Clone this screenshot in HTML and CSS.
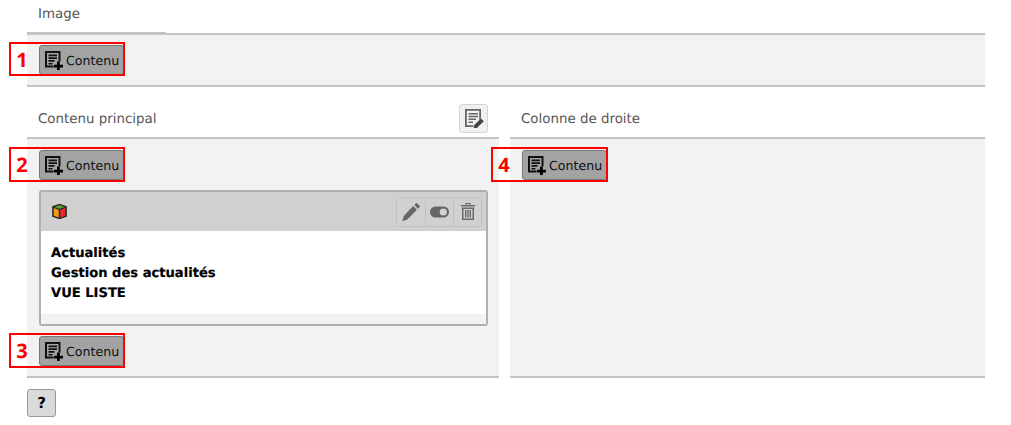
FILE: index.html
```html
<!DOCTYPE html>
<html lang="fr">
<head>
<meta charset="utf-8">
<title>Page</title>
<link rel="stylesheet" href="styles.css">
</head>
<body>
<svg class="defs" width="0" height="0" aria-hidden="true">
  <symbol id="doc-plus" viewBox="0 0 20 20">
    <path d="M1 1h15.500v10.500h-2V3H3v12.500h6.500v2H1z" fill="#111"/>
    <path d="M4.500 4.500h8.500v1.700H4.500zM4.500 7.300h8.500v1.700H4.500zM4.500 10.100h6v1.700h-6zM4.500 12.900h4v1.700h-4z" fill="#111"/>
    <path d="M13 11.500h2.800v3.200H19v2.800h-3.200V20.500H13v-3H10v-2.800h3z" fill="#000"/>
  </symbol>
</svg>
<main class="page">
  <section class="zone">
    <header class="zone-head zone-head-image"><span class="zone-title">Image</span></header>
    <div class="zone-body zone-body-image">
      <div class="callout callout-1"><span class="callout-num">1</span></div>
      <button class="add"><svg class="add-icon"><use href="#doc-plus"/></svg>Contenu</button>
    </div>
  </section>
  <div class="columns">
    <section class="zone column-left">
      <header class="zone-head">
        <span class="zone-title">Contenu principal</span>
        <button class="edit-btn" aria-label="Modifier">
          <svg viewBox="0 0 20 20" width="20" height="20">
            <path d="M1 1h16v9.500l-1.800 1.800V2.800H2.800v14.400h6.700L9 19H1z" fill="#666"/>
            <path d="M4.500 5h9.500v1.500H4.500zM4.500 7.800h9.500v1.500H4.500zM4.500 10.600h7.500v1.500H4.500zM4.500 13.400h4.500v1.500H4.500z" fill="#666"/>
            <path d="M17 10.500l2.800 2.800-6.800 6.700-3.500.500.700-3.400z" fill="#444"/>
          </svg>
        </button>
      </header>
      <div class="zone-body">
        <div class="callout callout-2"><span class="callout-num">2</span></div>
        <button class="add"><svg class="add-icon"><use href="#doc-plus"/></svg>Contenu</button>
        <article class="card">
          <div class="card-head">
            <svg class="cube" viewBox="0 0 18 18" width="17" height="17">
              <path d="M9 .8l7.800 2.700v11L9 17.300l-7.800-2.800v-11z" fill="#2b2b2b"/>
              <path d="M9 2.300l5.300 1.900L9 6.100 3.700 4.200z" fill="#5fa82b"/>
              <path d="M2.900 5.400l5.300 2v8L2.900 13.500z" fill="#f59a14"/>
              <path d="M15.100 5.400l-5.300 2v8l5.300-1.900z" fill="#e8262c"/>
            </svg>
            <div class="tools">
              <button class="tool" aria-label="Modifier">
                <svg viewBox="0 0 20 20" width="20" height="20"><path d="M15.500.8l3.700 3.700-2.200 2.200-3.700-3.700zM12.200 4.100l3.700 3.700-9.600 9.600-5 1.800 1.500-5.200z" fill="#666"/></svg>
              </button>
              <button class="tool" aria-label="Masquer">
                <svg viewBox="0 0 19 12" width="19" height="12"><rect y="0.500" width="19" height="11" rx="5.500" fill="#666"/><circle cx="13.300" cy="6" r="3.600" fill="#d2d2d2"/></svg>
              </button>
              <button class="tool" aria-label="Supprimer">
                <svg viewBox="0 0 14 17" width="14" height="17"><path d="M4.500 0h5v2H14v1.500H0V2h4.500zM5.700 1v1h2.600V1zM1 4.500h12V17H1zM2.500 6v9.500h9V6zM4 7h1.400v7.500H4zM6.300 7h1.400v7.500H6.300zM8.600 7H10v7.500H8.600z" fill="#6a6a6a" fill-rule="evenodd"/></svg>
              </button>
            </div>
          </div>
          <div class="card-body">
            <p>Actualités</p>
            <p>Gestion des actualités</p>
            <p>VUE LISTE</p>
          </div>
          <div class="card-foot"></div>
        </article>
        <div class="add-last">
          <div class="callout callout-3"><span class="callout-num">3</span></div>
          <button class="add"><svg class="add-icon"><use href="#doc-plus"/></svg>Contenu</button>
        </div>
      </div>
    </section>
    <section class="zone column-right">
      <header class="zone-head"><span class="zone-title">Colonne de droite</span></header>
      <div class="zone-body">
        <div class="callout callout-4"><span class="callout-num">4</span></div>
        <button class="add"><svg class="add-icon"><use href="#doc-plus"/></svg>Contenu</button>
      </div>
    </section>
  </div>
  <button class="help">?</button>
</main>
</body>
</html>
```
FILE: styles.css
```css
* { box-sizing: border-box; }
html, body { margin: 0; height: 100%; background: #fff; overflow: hidden; }
body { font-family: "DejaVu Sans", sans-serif; color: #000; text-rendering: geometricPrecision; }
button { font-family: inherit; cursor: pointer; text-rendering: geometricPrecision; }
.defs { position: absolute; }
.page { padding-left: 27px; width: 985px; }

.zone-head {
  display: flex; align-items: center; justify-content: space-between;
  height: 52px; padding: 12px 11px 0;
  border-bottom: 2px solid #c4c4c4;
}
.zone-head-image { height: 35px; padding: 0 11px 7px; position: relative; }
.zone-head-image::after {
  content: ""; position: absolute; left: 0; top: 32px; width: 139px;
  background: #c4c4c4; height: 1px;
}
.zone-title { font-size: 13.4px; color: #555; position: relative; top: 1px; }
.zone-body {
  position: relative;
  background: #f2f2f2; padding: 11px 12px;
  border-bottom: 2px solid #c4c4c4;
}
.zone-body-image { height: 52px; padding-top: 10px; }

.add {
  display: flex; align-items: center; gap: 2px;
  width: 85px; height: 30px; padding: 0 0 0 4px;
  background: #a3a3a3; border: 1px solid #777; border-radius: 3px;
  font-size: 12.600px; color: #111;
}
.add-icon { width: 20px; height: 20px; flex: none; }

.callout {
  position: absolute; left: -18px;
  width: 116px; height: 35px;
  border: 2px solid #f00; z-index: 2; pointer-events: none;
  display: flex; align-items: center;
}
.callout-1 { top: 7px; height: 34px; }
.callout-2 { top: 8px; }
.callout-3 { left: -30px; top: -3px; }
.callout-4 { left: -19px; top: 8px; width: 117px; }
.callout-num {
  font-family: "Open Sans", sans-serif; font-weight: 700; font-size: 20px;
  color: #f00; width: 22px; text-align: center;
}

.columns { display: flex; gap: 11px; }
.column-left { width: 472px; flex: none; }
.column-right { flex: 1; }
.column-left .zone-body, .column-right .zone-body { height: 239px; }

.edit-btn {
  width: 29px; height: 29px; padding: 0;
  display: flex; align-items: center; justify-content: center;
  background: #f0f0f0; border: 1px solid #d4d4d4; border-radius: 3px;
}

.card {
  margin-top: 10px; width: 449px; height: 136px;
  border: 2px solid #b0b0b0; border-radius: 3px;
  background: #fff; display: flex; flex-direction: column;
}
.card-head {
  height: 39px; background: #d0d0d0; flex: none;
  display: flex; align-items: center; justify-content: space-between;
  padding: 0 4px 0 10px;
}
.cube { display: block; }
.tools { display: flex; height: 30px; border: 1px solid #c2c2c2; border-radius: 3px; }
.tool {
  width: 28px; padding: 0; background: #d0d0d0; border: 0;
  display: flex; align-items: center; justify-content: center;
}
.tool + .tool { border-left: 1px solid #c2c2c2; }
.card-body { flex: 1; padding: 13px 10px 0; }
.card-body p { margin: 0; font-weight: 700; font-size: 13.100px; line-height: 20px; color: #000; -webkit-text-stroke: 0.2px #000; }
.card-foot { height: 10px; background: #f2f2f2; flex: none; }

.add-last { position: relative; margin-top: 10px; }

.help {
  display: block; margin-top: 11px; width: 29px; height: 28px; padding: 0;
  background: #dadada; border: 1px solid #999; border-radius: 3px;
  font-size: 15px; font-weight: 700; color: #000;
}
```
